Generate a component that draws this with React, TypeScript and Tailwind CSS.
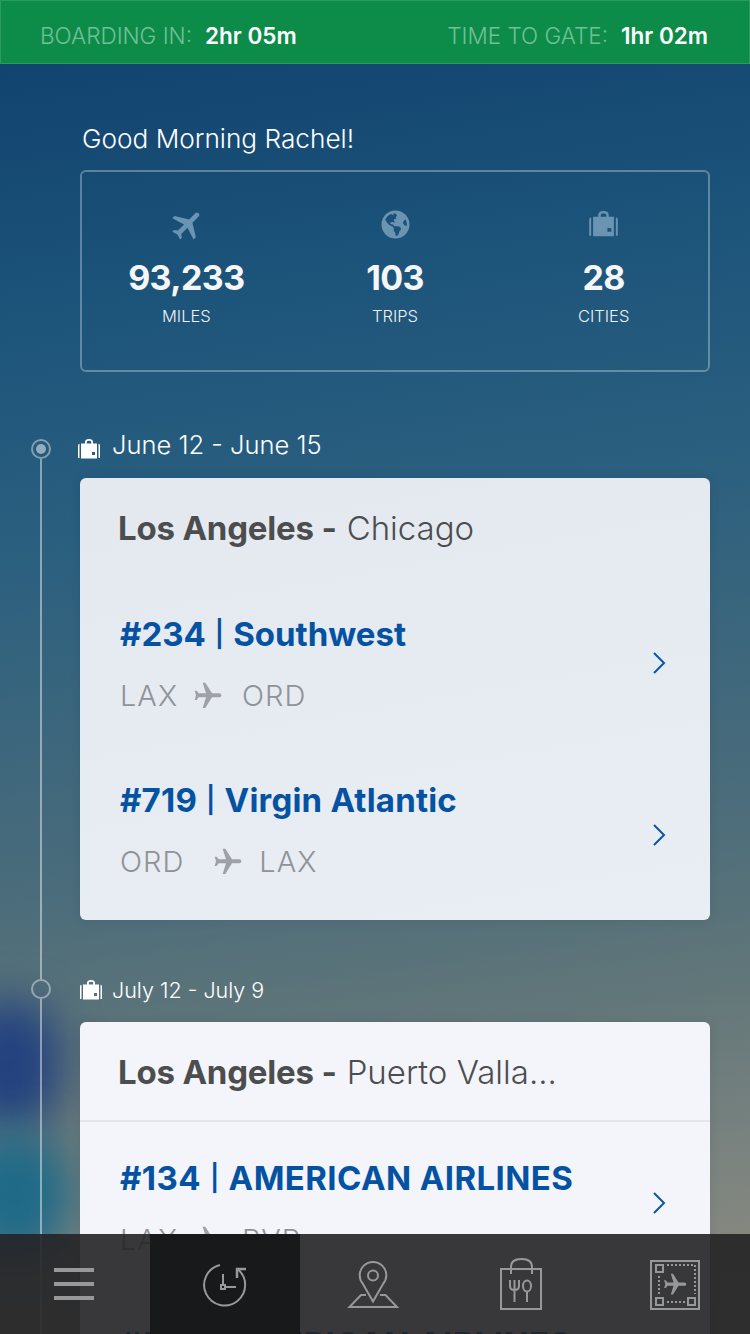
import React from "react";
import { FaGlobeAmericas } from "react-icons/fa";

const PLANE = "M21 16v-2l-8-5V3.5c0-.83-.67-1.5-1.5-1.5S10 2.67 10 3.5V9l-8 5v2l8-2.5V19l-2 1.5V22l3.5-1 3.5 1v-1.5L13 19v-5.5l8 2.5z";

function Plane({ className, rotate }: { className: string; rotate: number }) {
  return (
    <svg viewBox="0 0 24 24" className={className} fill="currentColor" aria-hidden>
      <path d={PLANE} transform={`rotate(${rotate} 12 12)`} />
    </svg>
  );
}

function Bag({ className }: { className: string }) {
  return (
    <svg viewBox="0 0 22 20" className={className} fill="currentColor" aria-hidden>
      <path
        fillRule="evenodd"
        d="M0 6.5Q0 5 1.5 4.8V19H0ZM20.5 4.8Q22 5 22 6.5V19H20.5ZM3 4.5H7V3Q7 0 11 0T15 3V4.5H19V19.5H3ZM8.8 4.5H13.2V3Q13.2 1.8 11 1.8T8.8 3ZM14 13V16H17V13Z"
      />
    </svg>
  );
}

function Chevron() {
  return (
    <svg viewBox="0 0 14 24" className="h-[24px] w-[14px] text-[#0b56a6]" fill="none" stroke="currentColor" strokeWidth="2" aria-hidden>
      <path d="M2 2 12 12 2 22" />
    </svg>
  );
}

function Stat({ icon, value, label }: { icon: React.ReactNode; value: string; label: string }) {
  return (
    <div className="flex flex-col items-center">
      <div className="flex h-[34px] items-center justify-center text-[#6b93b2]">{icon}</div>
      <div className="mt-[15px] text-[34px] leading-[44px] font-bold tracking-[-0.6px] text-[#f4f6f8]">{value}</div>
      <div className="mt-[4px] text-[16.5px] leading-[24px] font-light text-[#eef2f5]">{label}</div>
    </div>
  );
}

function Flight({ num, name, from, to, gap, planeGap, chevron, track }: { num: string; name: string; from: string; to: string; gap: string; planeGap: string; chevron: string; track: string }) {
  return (
    <div className="flex h-[166px] items-start justify-between pr-[44px] pl-[40px]">
      <div>
        <div className={`mt-[33px] flex items-center text-[33px] leading-[46px] font-bold whitespace-nowrap text-[#0452a1] ${track}`}>
          <span>{num}</span>
          <span className="mx-[9px] text-[26px] font-semibold">|</span>
          <span>{name}</span>
        </div>
        <div className="mt-[23px] flex h-[32px] items-center text-[29px] font-light tracking-[1px] text-[#8f9397]">
          <span>{from}</span>
          <Plane rotate={90} className={`h-[32px] w-[32px] text-[#9ea2a6] ${planeGap}`} />
          <span className={gap}>{to}</span>
        </div>
      </div>
      <div className={chevron}>
        <Chevron />
      </div>
    </div>
  );
}

function TabBar() {
  return (
    <div className="absolute inset-x-0 bottom-0 flex h-[100px] bg-[rgba(36,36,38,0.9)] text-[#97989a]">
      <div className="flex w-[150px] items-center justify-center">
        <div className="flex w-[40px] -translate-x-[1px] flex-col gap-[10px]">
          <div className="h-[4px] bg-[#97989a]" />
          <div className="h-[4px] bg-[#97989a]" />
          <div className="h-[4px] bg-[#97989a]" />
        </div>
      </div>
      <div className="flex w-[150px] items-center justify-center bg-[#18191b]">
        <svg viewBox="0 0 150 100" className="h-[100px] w-[150px]" fill="none" stroke="currentColor" strokeWidth="2" aria-hidden>
          <path d="M70 31A20.5 20.5 0 1 0 87.5 35" />
          <path strokeWidth="2.5" d="M96 35H87V44" />
          <path d="M73 40V51M76 53H86" />
          <rect x="71" y="51" width="4" height="4" />
        </svg>
      </div>
      <div className="flex w-[150px] items-center justify-center">
        <svg viewBox="0 0 150 100" className="h-[100px] w-[150px]" fill="none" stroke="currentColor" strokeWidth="2" aria-hidden>
          <path d="M73 67.5 63 50A13.3 13.3 0 1 1 83 50Z" />
          <circle cx="73" cy="41.5" r="5" />
          <path d="M66 61H61L49.5 73H97L85.5 61H80" />
        </svg>
      </div>
      <div className="flex w-[150px] items-center justify-center">
        <svg viewBox="0 0 150 100" className="h-[100px] w-[150px]" fill="none" stroke="currentColor" strokeWidth="2" aria-hidden>
          <rect x="51" y="35" width="40" height="40" />
          <path d="M61 40V33Q61 25 71.5 25T82 33V40" />
          <path d="M60 46V52Q60 56 64.5 56T69 52V46M64.5 46V68" />
          <ellipse cx="77" cy="52" rx="4" ry="5.5" />
          <path d="M77 57.5V68" />
        </svg>
      </div>
      <div className="flex w-[150px] items-center justify-center">
        <svg viewBox="0 0 150 100" className="h-[100px] w-[150px]" fill="none" stroke="currentColor" strokeWidth="2" aria-hidden>
          <rect x="51" y="27" width="48" height="48" />
          <rect x="56" y="31" width="7" height="7" />
          <rect x="56" y="64" width="7" height="7" />
          <rect x="88" y="64" width="7" height="7" />
          <path strokeDasharray="2 2" d="M67 31H95V60M67 68H85M59 42V60" />
          <g transform="translate(62 37.5) scale(1.1)">
            <path d={PLANE} fill="currentColor" stroke="none" transform="rotate(90 12 12)" />
          </g>
        </svg>
      </div>
    </div>
  );
}

export default function App() {
  return (
    <div className="relative h-[1334px] w-[750px] overflow-hidden bg-[linear-gradient(172deg,#11436f_4%,#1b5279_20%,#2a5f7f_38%,#4a6c7b_62%,#5f7579_74%,#7c8480_88%,#8f8c7c_100%)] font-['Inter','Liberation_Sans',sans-serif]">
      <div className="absolute top-[1000px] -left-[40px] h-[130px] w-[100px] rounded-full bg-[#23427f] blur-[22px]" />
      <div className="absolute top-[1130px] -left-[40px] h-[130px] w-[110px] rounded-full bg-[#1f6a88] blur-[22px]" />

      <div className="relative">
        <header className="flex h-[64px] items-center justify-between border border-[#2a9c5e] bg-[#0c8c48] pt-[7px] pr-[41px] pl-[39px] text-[22.5px]">
          <div className="flex items-center gap-[13px]">
            <span className="font-light text-[#72c097]">BOARDING IN:</span>
            <span className="font-semibold text-white">2hr 05m</span>
          </div>
          <div className="flex items-center gap-[13px]">
            <span className="font-light text-[#72c097]">TIME TO GATE:</span>
            <span className="font-semibold text-white">1hr 02m</span>
          </div>
        </header>

        <section className="pt-[57px] pr-[40px] pl-[80px]">
          <h1 className="pl-[2px] text-[26.2px] leading-[36px] font-light text-white">Good Morning Rachel!</h1>
          <div className="mt-[13px] grid h-[202px] grid-cols-3 rounded-[6px] border-2 border-[rgba(255,255,255,0.3)] pt-[35px]">
            <Stat icon={<Plane rotate={45} className="h-[38px] w-[38px] translate-x-[2px] translate-y-[1px]" />} value="93,233" label="MILES" />
            <Stat icon={<FaGlobeAmericas className="h-[29px] w-[29px] translate-x-[1px]" />} value="103" label="TRIPS" />
            <Stat icon={<Bag className="h-[26px] w-[29px]" />} value="28" label="CITIES" />
          </div>
        </section>

        <section className="mt-[67px] flex">
          <div className="flex w-[80px] flex-col items-center">
            <div className="mr-[-2px] flex h-[20px] w-[20px] items-center justify-center rounded-full border-2 border-[rgba(255,255,255,0.42)]">
              <div className="h-[10px] w-[10px] rounded-full bg-[rgba(255,255,255,0.5)]" />
            </div>
            <div className="mr-[-2px] w-[2px] flex-1 bg-[rgba(255,255,255,0.45)]" />
          </div>
          <div className="w-[630px] pb-[59px]">
            <div className="flex h-[39px] items-start">
              <Bag className="ml-[-2px] h-[20px] w-[22px] text-white" />
              <span className="ml-[12px] -translate-y-[12px] text-[25.5px] leading-[36px] font-light text-white">June 12 - June 15</span>
            </div>
            <div className="h-[442px] rounded-[6px] bg-[linear-gradient(170deg,#e4e9f0,#e9edf4)] shadow-[0_0_12px_rgba(0,0,0,0.08)]">
              <div className="flex h-[100px] items-center border-b border-[#e6e9ed] pt-[2px] pl-[38px] text-[33px] text-[#4c4d4f]">
                <span className="font-bold tracking-[-0.2px]">Los Angeles -</span>
                <span className="ml-[10px] font-light">Chicago</span>
              </div>
              <Flight num="#234" name="Southwest" from="LAX" to="ORD" planeGap="ml-[14px]" gap="ml-[18px]" chevron="mt-[73px]" track="tracking-[0px]" />
              <Flight num="#719" name="Virgin Atlantic" from="ORD" to="LAX" planeGap="ml-[28px]" gap="ml-[15px]" chevron="mt-[79px]" track="tracking-[0.2px]" />
            </div>
          </div>
        </section>

        <section className="flex">
          <div className="flex w-[80px] flex-col items-center">
            <div className="mr-[-2px] h-[20px] w-[20px] rounded-full border-2 border-[rgba(255,255,255,0.42)]" />
            <div className="mr-[-2px] w-[2px] flex-1 bg-[rgba(255,255,255,0.45)]" />
          </div>
          <div className="w-[630px]">
            <div className="flex h-[43px] items-start">
              <Bag className="mt-[1px] h-[20px] w-[22px] text-white" />
              <span className="ml-[10px] -translate-y-[5px] text-[21.5px] leading-[32px] font-light text-white">July 12 - July 9</span>
            </div>
            <div className="rounded-t-[6px] bg-[#f3f5fa] shadow-[0_0_12px_rgba(0,0,0,0.08)]">
              <div className="flex h-[100px] items-center border-b-2 border-[#e3e6ea] pt-[4px] pl-[38px] text-[33px] text-[#4c4d4f]">
                <span className="font-bold tracking-[-0.2px]">Los Angeles -</span>
                <span className="ml-[10px] font-light">Puerto Valla...</span>
              </div>
              <Flight num="#134" name="AMERICAN AIRLINES" from="LAX" to="PVR" planeGap="ml-[14px]" gap="ml-[18px]" chevron="mt-[69px]" track="tracking-[0.4px]" />
              <Flight num="#512" name="AMERICAN AIRLINES" from="PVR" to="LAX" planeGap="ml-[14px]" gap="ml-[18px]" chevron="mt-[69px]" track="tracking-[0.4px]" />
            </div>
          </div>
        </section>
      </div>

      <TabBar />
    </div>
  );
}
